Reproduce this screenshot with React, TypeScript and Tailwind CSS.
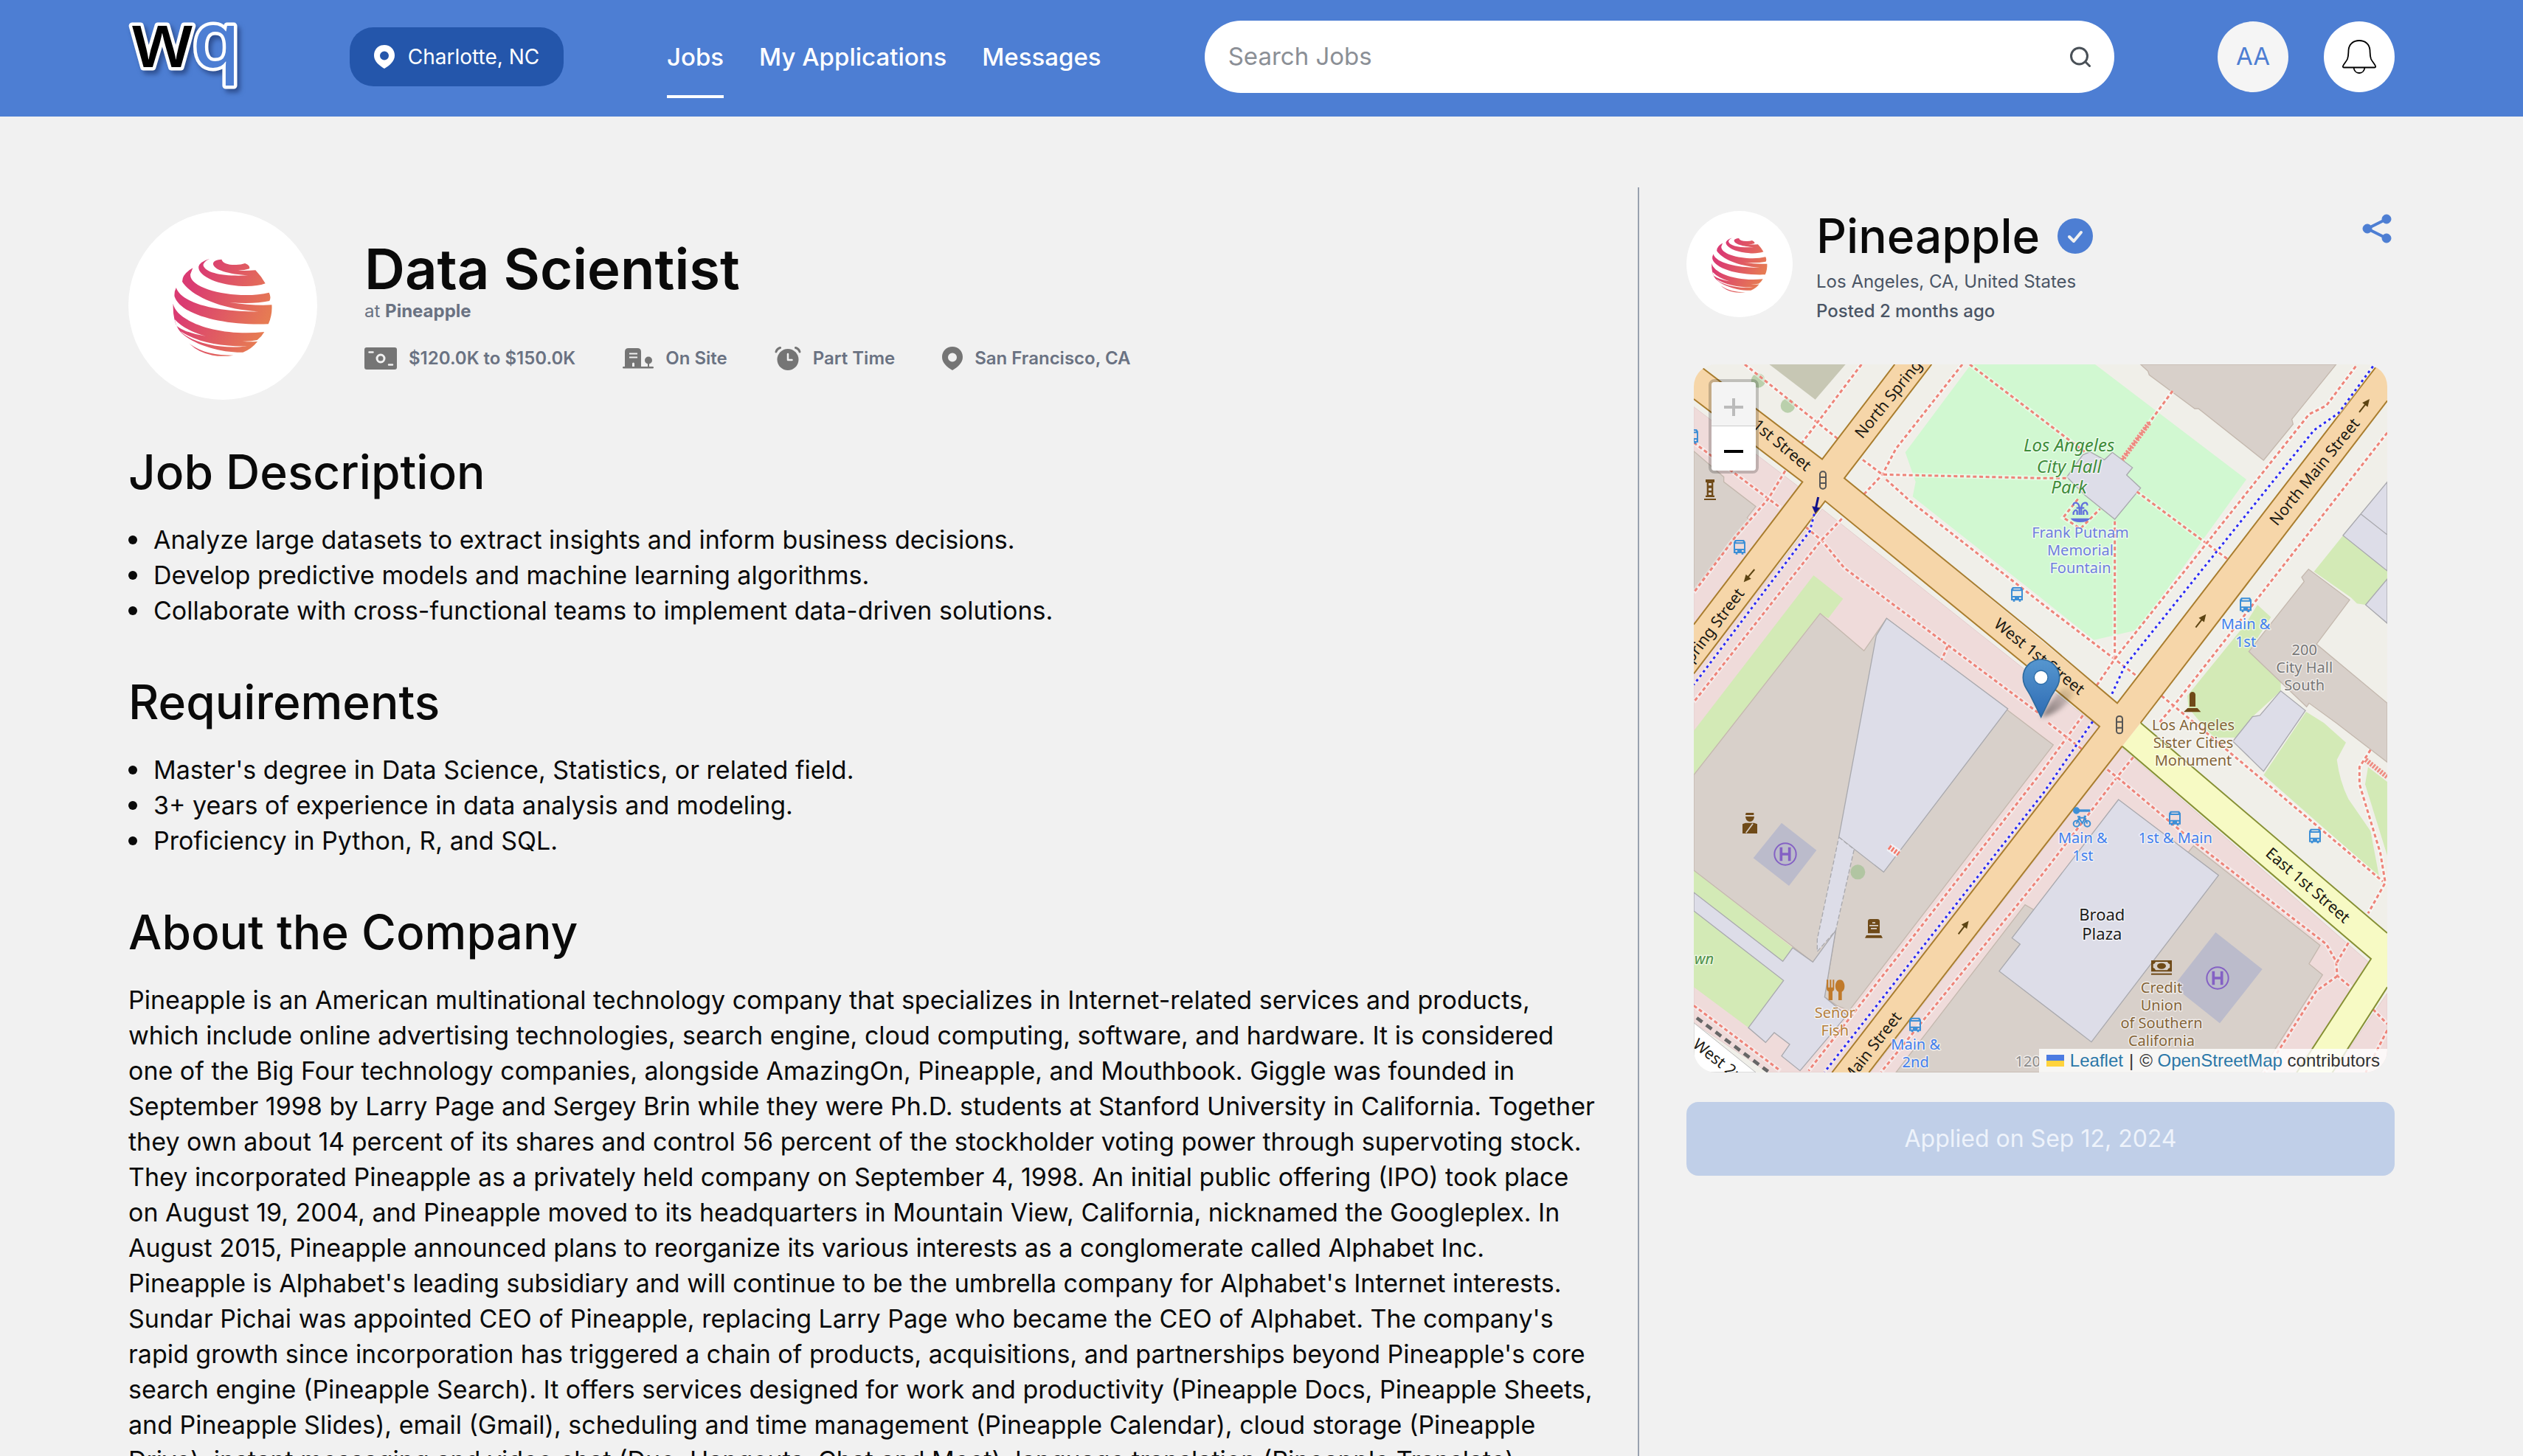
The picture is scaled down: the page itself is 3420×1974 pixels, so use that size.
import type { ReactNode } from "react";

const NAV_LINKS = ["Jobs", "My Applications", "Messages"];

const DESCRIPTION = [
  "Analyze large datasets to extract insights and inform business decisions.",
  "Develop predictive models and machine learning algorithms.",
  "Collaborate with cross-functional teams to implement data-driven solutions.",
];

const REQUIREMENTS = [
  "Master's degree in Data Science, Statistics, or related field.",
  "3+ years of experience in data analysis and modeling.",
  "Proficiency in Python, R, and SQL.",
];

const ABOUT = [
  "Pineapple is an American multinational technology company that specializes in Internet-related services and products,",
  "which include online advertising technologies, search engine, cloud computing, software, and hardware. It is considered",
  "one of the Big Four technology companies, alongside AmazingOn, Pineapple, and Mouthbook. Giggle was founded in",
  "September 1998 by Larry Page and Sergey Brin while they were Ph.D. students at Stanford University in California. Together",
  "they own about 14 percent of its shares and control 56 percent of the stockholder voting power through supervoting stock.",
  "They incorporated Pineapple as a privately held company on September 4, 1998. An initial public offering (IPO) took place",
  "on August 19, 2004, and Pineapple moved to its headquarters in Mountain View, California, nicknamed the Googleplex. In",
  "August 2015, Pineapple announced plans to reorganize its various interests as a conglomerate called Alphabet Inc.",
  "Pineapple is Alphabet's leading subsidiary and will continue to be the umbrella company for Alphabet's Internet interests.",
  "Sundar Pichai was appointed CEO of Pineapple, replacing Larry Page who became the CEO of Alphabet. The company's",
  "rapid growth since incorporation has triggered a chain of products, acquisitions, and partnerships beyond Pineapple's core",
  "search engine (Pineapple Search). It offers services designed for work and productivity (Pineapple Docs, Pineapple Sheets,",
  "and Pineapple Slides), email (Gmail), scheduling and time management (Pineapple Calendar), cloud storage (Pineapple",
  "Drive), instant messaging and video chat (Duo, Hangouts, Chat and Meet), language translation (Pineapple Translate),",
];

function Logo() {
  return (
    <svg viewBox="0 0 160 100" className="h-[100px] w-[160px] overflow-visible" role="img" aria-label="wq">
      <g
        fontFamily="Noto Sans, sans-serif"
        fontSize="104"
        fontWeight="500"
        stroke="#fff"
        strokeWidth="9"
        strokeLinejoin="round"
        paintOrder="stroke"
        style={{ filter: "drop-shadow(4px 5px 3px rgba(20,40,90,.55))" }}
      >
        <text x="87" y="64" fill="#4d7ed3">q</text>
        <text x="4" y="64" fill="#000">w</text>
      </g>
    </svg>
  );
}

function PinIcon({ className }: { className: string }) {
  return (
    <svg viewBox="0 0 28 32" className={className} fill="currentColor" aria-hidden>
      <path
        fillRule="evenodd"
        d="M14 0C6 0 0 6 0 14c0 8 6.500 13.500 14 18 7.500-4.500 14-10 14-18C28 6 22 0 14 0Zm0 8.500a6 6 0 1 1 0 12 6 6 0 0 1 0-12Z"
      />
    </svg>
  );
}

function CashIcon() {
  return (
    <svg viewBox="0 0 44 30" className="h-[30px] w-[44px]" aria-hidden>
      <rect width="44" height="30" rx="3" fill="#757575" />
      <circle cx="22" cy="15" r="5" fill="none" stroke="#f1f1f1" strokeWidth="3" />
      <path d="M6.500 6.500h5M33 23.500h5" stroke="#f1f1f1" strokeWidth="2.500" strokeLinecap="round" />
    </svg>
  );
}

function BuildingIcon() {
  return (
    <svg viewBox="0 0 42 28" className="h-[28px] w-[42px]" fill="#757575" aria-hidden>
      <path fillRule="evenodd" d="M3 26V5q0-5 5-5h12q5 0 5 5v21H16v-5q0-1.500-1.500-1.500T13 21v5ZM9 6.500v2h11v-2Zm0 5v2h11v-2Z" />
      <rect y="25" width="42" height="2.500" rx="1.200" />
      <ellipse cx="35" cy="16.500" rx="5" ry="5" />
      <path d="M34 18h2v8h-2z" />
    </svg>
  );
}

function AlarmIcon() {
  return (
    <svg viewBox="0 0 36 32" className="h-[32px] w-[36px]" aria-hidden>
      <circle cx="18" cy="17.500" r="14.500" fill="#757575" />
      <path d="M2 7Q3 3 7.500 1.500M34 7Q33 3 28.500 1.500" fill="none" stroke="#757575" strokeWidth="3" strokeLinecap="round" />
      <path d="M18 10v8h5.500" fill="none" stroke="#f1f1f1" strokeWidth="2.500" strokeLinecap="round" strokeLinejoin="round" />
    </svg>
  );
}

function BellIcon() {
  return (
    <svg viewBox="0 0 46 46" className="size-[46px]" fill="none" stroke="#000" strokeWidth="1.800" aria-hidden>
      <path d="M23 1c-8 0-14 5-14.500 13-.2 5 0 8-1.500 12-1.500 3.500-4.500 6-6 9.500-.5 1.300.2 2 1.500 2h41c1.300 0 2-.7 1.500-2-1.500-3.500-4.500-6-6-9.500-1.500-4-1.300-7-1.500-12C37 6 31 1 23 1Z" />
      <path d="M15.500 37.500c.5 4.500 3.500 7.500 7.500 7.500s7-3 7.500-7.500" />
    </svg>
  );
}

// Striped globe, the company's mark
function CompanyMark({ id, className }: { id: string; className: string }) {
  return (
    <svg viewBox="52 78 557 768" preserveAspectRatio="none" className={className} role="img" aria-label="Pineapple">
      <defs>
        <linearGradient id={id} gradientUnits="userSpaceOnUse" x1="220" y1="440" x2="460" y2="520">
          <stop offset="0" stopColor="#da3b72" />
          <stop offset="1" stopColor="#e67b53" />
        </linearGradient>
      </defs>
      <g fill={`url(#${id})`}>
        <path d="M327 275Q332 298 370 297Q385 297 396 291Q412 300 409 313Q395 320 376 320Q395 322 427 319Q445 345 456 373Q430 386 390 384C320 380 258 345 259 305Q262 285 292 272Q272 285 273 300C280 330 330 345 405 340C350 335 300 318 302 290Q305 277 327 275Z" />
        <path d="M242 310Q210 335 211 366C235 420 320 478 437 487C330 490 210 460 193 390Q187 405 188 425C205 500 330 545 465 538Q477 500 475 460Q420 464 350 450Q420 458 468 444Q474 430 467 410C380 440 230 400 235 335Z" />
        <path d="M184 455C195 530 320 590 453 570Q445 590 432 603Q410 610 388 608Q410 611 433 609Q415 640 390 653C300 655 215 600 198 555Q190 535 188 520Q183 490 184 455Z" />
        <path d="M232 618C270 655 310 665 362 665Q330 672 300 665Q260 655 232 618Z" />
      </g>
      <g fill="#fff">
        <path d="M188 518Q220 565 280 587Q220 574 194 545Z" />
        <path d="M206 568C260 615 330 630 402 628C330 642 240 615 206 568Z" />
      </g>
    </svg>
  );
}

function MetaItem({ icon, children }: { icon: ReactNode; children: ReactNode }) {
  return (
    <li className="flex items-center gap-4">
      {icon}
      <span>{children}</span>
    </li>
  );
}

function Section({ title, children }: { title: string; children: ReactNode }) {
  return (
    <section className="mt-[62px] pb-[2px]">
      <h2 className="mb-8 text-[64px] leading-[72px] font-medium">{title}</h2>
      {children}
    </section>
  );
}

function BulletList({ items }: { items: string[] }) {
  return (
    <ul>
      {items.map((item) => (
        <li key={item} className="flex items-center gap-[22px]">
          <span className="size-3 shrink-0 rounded-full bg-neutral-950" />
          {item}
        </li>
      ))}
    </ul>
  );
}

const FOOTPATHS = [
  "285,42 670,350",
  "760,42 515,365",
  "1170,42 900,385 845,490 770,570",
  "765,430 845,490 1500,505 1600,505",
  "860,510 960,600 1500,1020 1880,1310",
  "1200,42 1500,270 1670,400",
  "78,360 430,625",
  "450,475 380,590 250,740 78,970",
  "535,705 600,760 690,870 1480,1460",
  "680,670 590,765 78,1415",
  "1110,1190 1085,1245",
  "2025,150 1820,430",
  "1640,590 1580,665 1650,710 1730,630",
  "1790,680 1790,1240",
  "1880,560 2250,835",
  "2770,50 2650,210 2580,245 1790,1240 1715,1350",
  "2898,320 2030,1430 1970,1500",
  "1980,1390 2150,1530 2400,1740 2880,2145",
  "1865,1640 1800,1720 1500,2110 840,2920",
  "1760,1690 1810,1730 2100,1975 2650,2400 2690,2470 2695,2530 2750,2575",
  "2740,2395 2690,2480",
  "2695,2530 2610,2590 2400,2922",
  "1660,1470 1500,1690 545,2915",
  "1520,1500 1660,1610",
  "78,2650 430,2915",
  "2830,1610 2785,1680 2785,1750 2870,2030 2890,2150 2820,2275",
  "2840,2665 2898,2725",
  "2898,2750 2810,2922",
];

const STEPS = ["1930,280 1820,430", "2810,1650 2898,1720"];

const CYCLEWAYS = [
  "2840,50 2700,240 2600,310 1830,1270 1775,1390",
  "568,650 550,720 78,1345",
  "1700,1495 1500,1785 610,2920",
];

const ROAD_EDGES = [
  "110,54 600,428 895,42",
  "78,183 520,520 78,1100",
  "1045,42 690,505 1500,1165 1800,1420 2850,55",
  "78,1300 612,598 1440,1275 1728,1515 1500,1810 640,2922",
  "2898,190 1895,1500",
  "1820,1595 1500,2005 790,2922",
];

const BUS_STOPS = [
  [264, 785],
  [72, 335],
  [1392, 977],
  [2322, 1020],
  [2034, 1888],
  [2604, 1960],
  [978, 2728],
];

// [x, y, angle]
const ARROWS = [
  [303, 902, 130],
  [2140, 1085, -52],
  [2805, 210, -52],
  [1175, 2332, -52],
];

const STREET_LABELS: { text: string; x: number; y: number; angle: number; anchor: "start" | "middle" | "end" }[] = [
  { text: "North Spring Street", x: 748, y: 335, angle: -51, anchor: "start" },
  { text: "West 1st Street", x: 545, y: 464, angle: 40, anchor: "end" },
  { text: "West 1st Street", x: 1482, y: 1232, angle: 39, anchor: "middle" },
  { text: "North Spring Street", x: 270, y: 962, angle: -53, anchor: "end" },
  { text: "North Main Street", x: 2604, y: 480, angle: -51, anchor: "middle" },
  { text: "South Main Street", x: 910, y: 2685, angle: -52, anchor: "end" },
  { text: "East 1st Street", x: 2574, y: 2162, angle: 41, anchor: "middle" },
  { text: "West 2nd Street", x: 82, y: 2800, angle: 38, anchor: "start" },
];

const PLACES = [
  { lines: ["Los Angeles", "City Hall", "Park"], x: 1604, y: 396, size: 72, pitch: 86, fill: "#3f8c3a", italic: true },
  { lines: ["Frank Putnam", "Memorial", "Fountain"], x: 1650, y: 748, size: 60, pitch: 72, fill: "#6f7ede" },
  { lines: ["Main &", "1st"], x: 2322, y: 1120, size: 60, pitch: 72, fill: "#4180ee" },
  { lines: ["200", "City Hall", "South"], x: 2561, y: 1225, size: 60, pitch: 72, fill: "#777" },
  { lines: ["Los Angeles", "Sister Cities", "Monument"], x: 2109, y: 1530, size: 60, pitch: 72, fill: "#846437" },
  { lines: ["Main &", "1st"], x: 1660, y: 1990, size: 60, pitch: 72, fill: "#4180ee" },
  { lines: ["1st & Main"], x: 2036, y: 1990, size: 60, pitch: 72, fill: "#4180ee" },
  { lines: ["Broad", "Plaza"], x: 1738, y: 2303, size: 66, pitch: 78, fill: "#1c1c1c" },
  { lines: ["Credit", "Union", "of Southern", "California"], x: 1980, y: 2598, size: 60, pitch: 72, fill: "#846437" },
  { lines: ["Señor", "Fish"], x: 652, y: 2700, size: 60, pitch: 72, fill: "#b5803c" },
  { lines: ["Main &", "2nd"], x: 980, y: 2828, size: 60, pitch: 72, fill: "#4180ee" },
  { lines: ["120"], x: 1436, y: 2898, size: 60, pitch: 72, fill: "#8a8a8a" },
  { lines: ["wn"], x: 120, y: 2482, size: 60, pitch: 72, fill: "#4c9148", italic: true },
];

function StreetMap() {
  return (
    <svg viewBox="78 42 2820 2880" className="block w-full" role="img" aria-label="Map around West 1st Street and Main Street, Los Angeles">
      <defs>
        <linearGradient id="marker" x1="0" y1="0" x2="0" y2="1">
          <stop offset="0" stopColor="#5696cf" />
          <stop offset="1" stopColor="#2e6cb4" />
        </linearGradient>
        <linearGradient id="marker-shadow" x1="0" y1="1" x2="1" y2="0">
          <stop offset="0" stopColor="#000" stopOpacity=".5" />
          <stop offset="1" stopColor="#000" stopOpacity=".05" />
        </linearGradient>
        <filter id="soft" x="-30%" y="-30%" width="160%" height="160%">
          <feGaussianBlur stdDeviation="10" />
        </filter>
      </defs>
      <rect x="78" y="42" width="2820" height="2880" fill="#f0efe9" />

      {/* pedestrian areas */}
      <g fill="#efdbda" stroke="#e3cdcc" strokeWidth="3">
        <path d="M78 215 505 540 78 1100ZM600 630 1420 1280 1728 1520 640 2922H380L78 2720V1300ZM1818 1600 2828 2478 2520 2930H790ZM2898 2600 2670 2930H2898Z" />
      </g>

      {/* parks and grass */}
      <path d="M385 42H695L572 185Z" fill="#c7c7b4" />
      <path d="M1205 42 938 400 980 520 968 580 1500 1000 1705 1163 1870 1125 1900 1100 2325 510 1710 42Z" fill="#d1f8d1" />
      <g fill="#d3eab6">
        <path d="M565 900 685 995 625 1075 590 1055 78 1712V1532Z" />
        <path d="M78 2100 480 2415 440 2470 78 2190ZM78 2265 443 2548 300 2740 78 2575Z" />
        <path d="M2718 738 2898 882V915L2810 1020 2775 1015 2750 990 2600 885Z" />
        <path d="M2370 1020 2425 1070 2335 1210 2465 1330V1370L2350 1475 2290 1560H2190L2090 1440 2085 1390 2320 1100Z" />
        <path d="M2568 1455 2640 1500 2730 1580 2693 1650Q2705 1740 2740 1810L2830 1940 2865 2125 2395 1712Z" />
        <path d="M2820 1680 2898 1740V2040L2808 1750Z" />
      </g>

      {/* buildings */}
      <g fill="#d8d0ca" stroke="#c4b8ae" strokeWidth="4">
        <path d="M78 395 200 500V520L330 620 295 665 305 678 160 850 78 960Z" />
        <path d="M1895 42 1925 70 1930 85 2115 222H2130L2395 432 2515 285 2510 265 2690 42Z" />
        <path d="M2578 875 2745 1000 2610 1180 2898 1420V1660L2690 1500 2580 1420 2570 1435 2335 1210 2560 925 2550 908Z" />
        <path d="M592 1055 770 1207 862 1075 1540 1590 710 2670 660 2650 610 2615 655 2350 562 2473 78 2100V1712Z" />
        <path d="M1425 2240 1460 2260 2090 2025 2110 2000 2625 2405 2580 2480 2635 2525 2440 2830 2385 2922H900Z" />
      </g>
      <g fill="#dddde8" stroke="#a9a9ae" strokeWidth="4">
        <path d="M862 1075 1355 1443 850 2107 668 1965 820 1145Z" />
        <path d="M668 1965 730 2015 655 2345 580 2430V2380Z" strokeDasharray="18 9" />
        <path d="M78 2190 440 2470 480 2415 562 2473 655 2345 610 2615 700 2690 510 2915 435 2855 468 2808 405 2760 370 2800 300 2740 443 2548 78 2265Z" />
        <path d="M1595 500 1660 410 1690 398 1748 430 1780 400 1862 462 1838 492 1895 545 1790 672 1670 575Z" />
        <path d="M2898 520 2718 738 2898 882ZM2898 915 2810 1020 2898 1095ZM2790 650 2898 735" />
        <path d="M2465 1370 2565 1450 2395 1697 2270 1575 2350 1475 2380 1470Z" />
        <path d="M1805 1812 2212 2120 1695 2798 1320 2510 1405 2400 1372 2375Z" />
      </g>
      <path d="M435 1907 577 2018 465 2163 320 2050ZM2200 2352 2390 2502 2217 2722 2070 2605 2045 2550Z" fill="#bbbbcb" />
      <g fill="#9dbf8c" fillOpacity=".65">
        <circle cx="340" cy="108" r="29" />
        <circle cx="460" cy="210" r="29" />
        <circle cx="745" cy="2107" r="30" />
      </g>

      {/* footpaths */}
      <g fill="none">
        {FOOTPATHS.map((points) => (
          <g key={points}>
            <polyline points={points} stroke="#fff" strokeOpacity=".45" strokeWidth="18" />
            <polyline points={points} stroke="#ee8479" strokeWidth="9" strokeDasharray="15 11" />
          </g>
        ))}
        {STEPS.map((points) => (
          <polyline key={points} points={points} stroke="#ee8c82" strokeWidth="20" strokeDasharray="8 5" />
        ))}
        <path d="M872 2005 912 2033" stroke="#fff" strokeOpacity=".6" strokeWidth="34" />
        <path d="M872 2005 912 2033" stroke="#f4796b" strokeWidth="20" strokeDasharray="8 6" />
      </g>

      {/* roads */}
      <path d="M1895 1500 2898 2355V2575L2670 2930H2525L2832 2460 1820 1595Z" fill="#f7fac4" />
      <g fill="none" stroke="#869034" strokeWidth="6">
        <path d="M1895 1500 2898 2355M1820 1595 2832 2460 2525 2930M2898 2575 2670 2930" />
      </g>
      <path d="M78 42H95L600 428 895 42H1045L690 505 1800 1420 2850 55 2898 42V190L1895 1500 1820 1595 1500 2005 790 2922H640L1500 1810 1728 1515 1440 1275 612 598 78 1300V1100L520 520 78 183Z" fill="#f6d6a9" />
      <g fill="none" stroke="#a97d2e" strokeWidth="6">
        {ROAD_EDGES.map((points) => (
          <polyline key={points} points={points} />
        ))}
      </g>
      <path d="M78 2720 330 2922H78Z" fill="#fff" stroke="#bbb" strokeWidth="3" />
      <path d="M90 2700 380 2918" stroke="#666" strokeWidth="14" strokeDasharray="28 20" />
      <g fill="none">
        {CYCLEWAYS.map((points) => (
          <g key={points}>
            <polyline points={points} stroke="#fff" strokeOpacity=".4" strokeWidth="15" />
            <polyline points={points} stroke="#2b2bf5" strokeWidth="9" strokeDasharray="10 13" />
          </g>
        ))}
      </g>
      <g stroke="#10108a" strokeWidth="9" fill="#10108a">
        <path d="M584 582 574 628" />
        <path d="M560 620 590 626 572 647Z" strokeWidth="2" />
      </g>
      {ARROWS.map(([x, y, angle]) => (
        <g key={`${x}-${y}`} transform={`translate(${x} ${y}) rotate(${angle})`}>
          <path d="M-34 0H10" stroke="#5c4413" strokeWidth="6" />
          <path d="M4-14 34 0 4 14Z" fill="#5c4413" />
        </g>
      ))}
      {[[603, 513], [1809, 1508]].map(([x, y]) => (
        <g key={x} transform={`translate(${x} ${y})`} fill="none" stroke="#555" strokeWidth="6">
          <rect x="-12" y="-35" width="24" height="70" rx="11" />
          <path d="M-12-12H12M-12 12H12" />
        </g>
      ))}

      {/* points of interest */}
      {BUS_STOPS.map(([x, y]) => (
        <g key={`${x}-${y}`} transform={`translate(${x} ${y})`} fill="#3d8fd6">
          <path fillRule="evenodd" d="M-18-29H18L24-20V25H16V30H8V25H-8V30H-16V25H-24V-20ZM-14-23V-19H14V-23ZM-18-13V7H18V-13ZM-17 13V19H-9V13ZM9 13V19H17V13Z" />
        </g>
      ))}
      {[[450, 2034], [2208, 2538]].map(([x, y]) => (
        <g key={x} transform={`translate(${x} ${y})`} fill="none" stroke="#8461c4">
          <circle r="44" strokeWidth="6" />
          <path d="M-17-28V28M17-28V28M-17 0H17" strokeWidth="11" />
        </g>
      ))}
      <g fill="#6f4a18">
        <path fillRule="evenodd" d="M126 510H162V522H157V575H162V582H126V575H131V522H126ZM138 525V535H150V525ZM138 545V555H150V545ZM138 563V573H150V563Z" />
        <path d="M120 588H168V594H120Z" />
        <path d="M290 1866H322V1875H288ZM288 1881H324Q322 1902 306 1902T288 1881ZM276 1912 288 1907H324L336 1912V1950H276Z" />
        <path d="M290 1948 318 1910" stroke="#d8d0ca" strokeWidth="5" />
        <path fillRule="evenodd" d="M786 2356V2308Q786 2298 796 2298H824Q834 2298 834 2308V2356ZM804 2311V2316H816V2311ZM792 2322V2327H828V2322ZM798 2334V2339H822V2334Z" />
        <path d="M780 2364H840L846 2375H774Z" />
        <path d="M2094 1434V1385Q2096 1374 2106 1374T2118 1385V1434ZM2086 1440H2126L2140 1456H2070Z" />
        <path fillRule="evenodd" d="M1938 2466H2022V2512H1938ZM1956 2472Q1954 2480 1946 2482V2496Q1954 2498 1956 2506H2004Q2006 2498 2014 2496V2482Q2006 2480 2004 2472Z" />
        <ellipse cx="1980" cy="2489" rx="18" ry="12" />
        <path d="M1938 2519H2022V2525H1938Z" />
      </g>
      <g fill="#c07a2b">
        <path d="M618 2545V2580Q618 2590 626 2592V2628H642V2592Q649 2590 649 2580V2545H643V2576H637V2545H631V2576H625V2545Z" />
        <path d="M672 2545C650 2545 648 2588 666 2594V2628H680V2594C697 2588 695 2545 672 2545Z" />
      </g>
      <g fill="none" stroke="#6070dc" strokeWidth="7">
        <path d="M1646 654V625Q1644 606 1632 605T1622 616M1654 654V625Q1656 606 1668 605T1678 616M1637 654V640Q1630 628 1622 645V654M1663 654V640Q1670 628 1678 645V654M1634 626H1666" />
        <path d="M1610 668Q1620 684 1650 684T1690 668Z" fill="#6070dc" stroke="none" />
      </g>
      <g fill="none" stroke="#3d8fd6" strokeWidth="6">
        <circle cx="1634" cy="1910" r="12" />
        <circle cx="1678" cy="1910" r="12" />
        <path d="M1634 1910 1645 1886H1668L1678 1910M1645 1888 1658 1908 1668 1888M1638 1882H1650M1664 1880H1674" />
        <path d="M1644 1857H1690" strokeWidth="10" />
        <circle cx="1634" cy="1857" r="11" fill="#3d8fd6" />
      </g>

      {/* labels */}
      <g fontFamily="Noto Sans, sans-serif" paintOrder="stroke" strokeLinejoin="round">
        {STREET_LABELS.map(({ text, x, y, angle, anchor }) => (
          <text key={`${text}-${x}`} transform={`translate(${x} ${y}) rotate(${angle})`} dy="20" fontSize="64" textAnchor={anchor} fill="#1c1a14">
            {text}
          </text>
        ))}
        {PLACES.map(({ lines, x, y, size, pitch, fill, italic }) => (
          <text
            key={`${lines[0]}-${x}`}
            fontSize={size}
            fontStyle={italic ? "italic" : "normal"}
            textAnchor="middle"
            fill={fill}
            stroke="#fff"
            strokeOpacity=".6"
            strokeWidth="9"
          >
            {lines.map((line, i) => (
              <tspan key={line} x={x} y={y + i * pitch}>
                {line}
              </tspan>
            ))}
          </text>
        ))}
      </g>

      {/* marker */}
      <path d="M1490 1478Q1530 1400 1580 1360 1635 1345 1620 1390 1570 1460 1490 1478Z" fill="url(#marker-shadow)" filter="url(#soft)" />
      <path
        d="M1490 1242C1448 1242 1417 1276 1417 1316C1417 1348 1434 1364 1450 1395L1490 1476 1530 1395C1546 1364 1565 1348 1565 1316C1565 1276 1532 1242 1490 1242Z"
        fill="url(#marker)"
        stroke="#2e6a9e"
        strokeWidth="5"
      />
      <circle cx="1490" cy="1315" r="28" fill="#fff" stroke="#2e6ea8" strokeWidth="4" />
    </svg>
  );
}

function Header() {
  return (
    <header className="flex h-[158px] items-center bg-[#4d7ed3] px-[174px] pb-1 text-white">
      <a href="#home" className="shrink-0">
        <Logo />
      </a>
      <button type="button" className="ml-[140px] flex h-20 w-[290px] shrink-0 items-center justify-center gap-[18px] rounded-[32px] bg-[#2456ab] text-[28px]">
        <PinIcon className="h-8 w-7" />
        Charlotte, NC
      </button>
      <nav className="ml-[140px] flex shrink-0 gap-12 text-[33px] leading-[48px] font-medium">
        {NAV_LINKS.map((label, i) => (
          <a
            key={label}
            href="#nav"
            className={i === 0 ? "border-b-4 border-white pt-8 pb-7" : "border-b-4 border-transparent pt-8 pb-7"}
          >
            {label}
          </a>
        ))}
      </nav>
      <label className="ml-[140px] flex h-[98px] flex-1 items-center rounded-full bg-white px-8">
        <input
          type="search"
          placeholder="Search Jobs"
          aria-label="Search Jobs"
          className="min-w-0 flex-1 bg-transparent text-[33px] text-black outline-none placeholder:text-[#8b8f96]"
        />
        <svg viewBox="0 0 28 28" className="size-7" fill="none" stroke="#495057" strokeWidth="3" strokeLinecap="round" aria-hidden>
          <circle cx="12.500" cy="13" r="11" />
          <path d="m21 21 5.500 5.500" />
        </svg>
      </label>
      <button type="button" className="ml-[140px] size-24 shrink-0 rounded-full bg-[#f5f5f5] text-[33px] text-[#4d7ed3]">
        AA
      </button>
      <button type="button" aria-label="Notifications" className="ml-12 flex size-24 shrink-0 items-center justify-center rounded-full bg-white">
        <BellIcon />
      </button>
    </header>
  );
}

function JobDetails() {
  return (
    <article className="min-w-0 flex-1 pt-8 text-[34px] leading-[48px]">
      <div className="flex items-center gap-16">
        <div className="size-64 shrink-0 overflow-hidden rounded-full bg-white">
          <CompanyMark id="mark-large" className="size-64" />
        </div>
        <div>
          <h1 className="text-[76px] leading-[76px] font-semibold">Data Scientist</h1>
          <p className="mt-1 text-[24px] leading-8 text-gray-500">
            at <strong className="font-bold">Pineapple</strong>
          </p>
          <ul className="mt-8 flex gap-16 text-[24px] leading-8 font-semibold text-gray-500">
            <MetaItem icon={<CashIcon />}>$120.0K to $150.0K</MetaItem>
            <MetaItem icon={<BuildingIcon />}>On Site</MetaItem>
            <MetaItem icon={<AlarmIcon />}>Part Time</MetaItem>
            <MetaItem icon={<PinIcon className="h-8 w-7 text-[#757575]" />}>San Francisco, CA</MetaItem>
          </ul>
        </div>
      </div>

      <Section title="Job Description">
        <BulletList items={DESCRIPTION} />
      </Section>
      <Section title="Requirements">
        <BulletList items={REQUIREMENTS} />
      </Section>
      <Section title="About the Company">
        <p className="whitespace-pre-line">{ABOUT.join("\n")}</p>
      </Section>
    </article>
  );
}

function CompanyPanel() {
  return (
    <aside className="w-[1026px] shrink-0 border-l-2 border-gray-400 pt-8 pl-16">
      <div className="flex items-start">
        <div className="size-36 shrink-0 overflow-hidden rounded-full bg-white">
          <CompanyMark id="mark-small" className="size-36" />
        </div>
        <div className="ml-8 flex-1 text-[24px] leading-10 text-gray-600">
          <h2 className="mb-2 flex items-center gap-6 text-[64px] leading-[68px] font-medium text-neutral-950">
            Pineapple
            <svg viewBox="0 0 48 48" className="size-12" aria-label="Verified">
              <circle cx="24" cy="24" r="24" fill="#4d7ed3" />
              <path d="m16 25 6 6 10-12" fill="none" stroke="#f1f1f1" strokeWidth="4" strokeLinecap="round" strokeLinejoin="round" />
            </svg>
          </h2>
          <p>Los Angeles, CA, United States</p>
          <p className="font-medium">Posted 2 months ago</p>
        </div>
        <button type="button" aria-label="Share" className="p-1 text-[#4d7ed3]">
          <svg viewBox="0 0 40 40" className="size-10" fill="currentColor" stroke="currentColor" aria-hidden>
            <path d="M33 7 7 20l26 13" fill="none" strokeWidth="4" />
            <circle cx="33" cy="7" r="6" />
            <circle cx="7" cy="20" r="6" />
            <circle cx="33" cy="33" r="6" />
          </svg>
        </button>
      </div>

      <div className="relative mx-[10px] mt-[52px] overflow-hidden rounded-[30px]">
        <StreetMap />
        <div className="absolute top-5 left-5 flex flex-col rounded-lg border-4 border-black/20 bg-clip-padding">
          <button type="button" disabled aria-label="Zoom in" className="flex size-[60px] items-center justify-center rounded-t border-b border-[#ccc] bg-[#f4f4f4]">
            <svg viewBox="0 0 26 34" className="h-[34px] w-[26px]" stroke="#bbb" strokeWidth="4" aria-hidden>
              <path d="M0 21h26M13 9v24" />
            </svg>
          </button>
          <button type="button" aria-label="Zoom out" className="flex size-[60px] items-center justify-center rounded-b bg-white">
            <svg viewBox="0 0 26 34" className="h-[34px] w-[26px]" stroke="#000" strokeWidth="4" aria-hidden>
              <path d="M0 21h26" />
            </svg>
          </button>
        </div>
        <div className="absolute right-0 bottom-0 flex h-8 items-center gap-2 bg-white/80 px-[10px] font-['Liberation_Sans',sans-serif] text-[24px] leading-8 text-[#333]">
          <a href="#leaflet" className="flex items-center gap-2 text-[#2a77a8]">
            <svg viewBox="0 0 24 16" className="h-4 w-6" aria-hidden>
              <path d="M0 0h24v8H0z" fill="#4c7be1" />
              <path d="M0 8h24v8H0z" fill="#ffd33d" />
            </svg>
            Leaflet
          </a>
          <span>|</span>
          <span>
            © <a href="#osm" className="text-[#2a77a8]">OpenStreetMap</a> contributors
          </span>
        </div>
      </div>

      <button type="button" disabled className="mt-10 h-[100px] w-full rounded-2xl bg-[#c0cfe8] text-[32px] text-[#eef3fb]">
        Applied on Sep 12, 2024
      </button>
    </aside>
  );
}

export default function App() {
  return (
    <div className="flex h-screen flex-col overflow-hidden bg-[#f1f1f1] font-[Inter,sans-serif] text-neutral-950">
      <Header />
      <main className="flex min-h-0 flex-1 px-[174px] pt-24">
        <JobDetails />
        <CompanyPanel />
      </main>
    </div>
  );
}
